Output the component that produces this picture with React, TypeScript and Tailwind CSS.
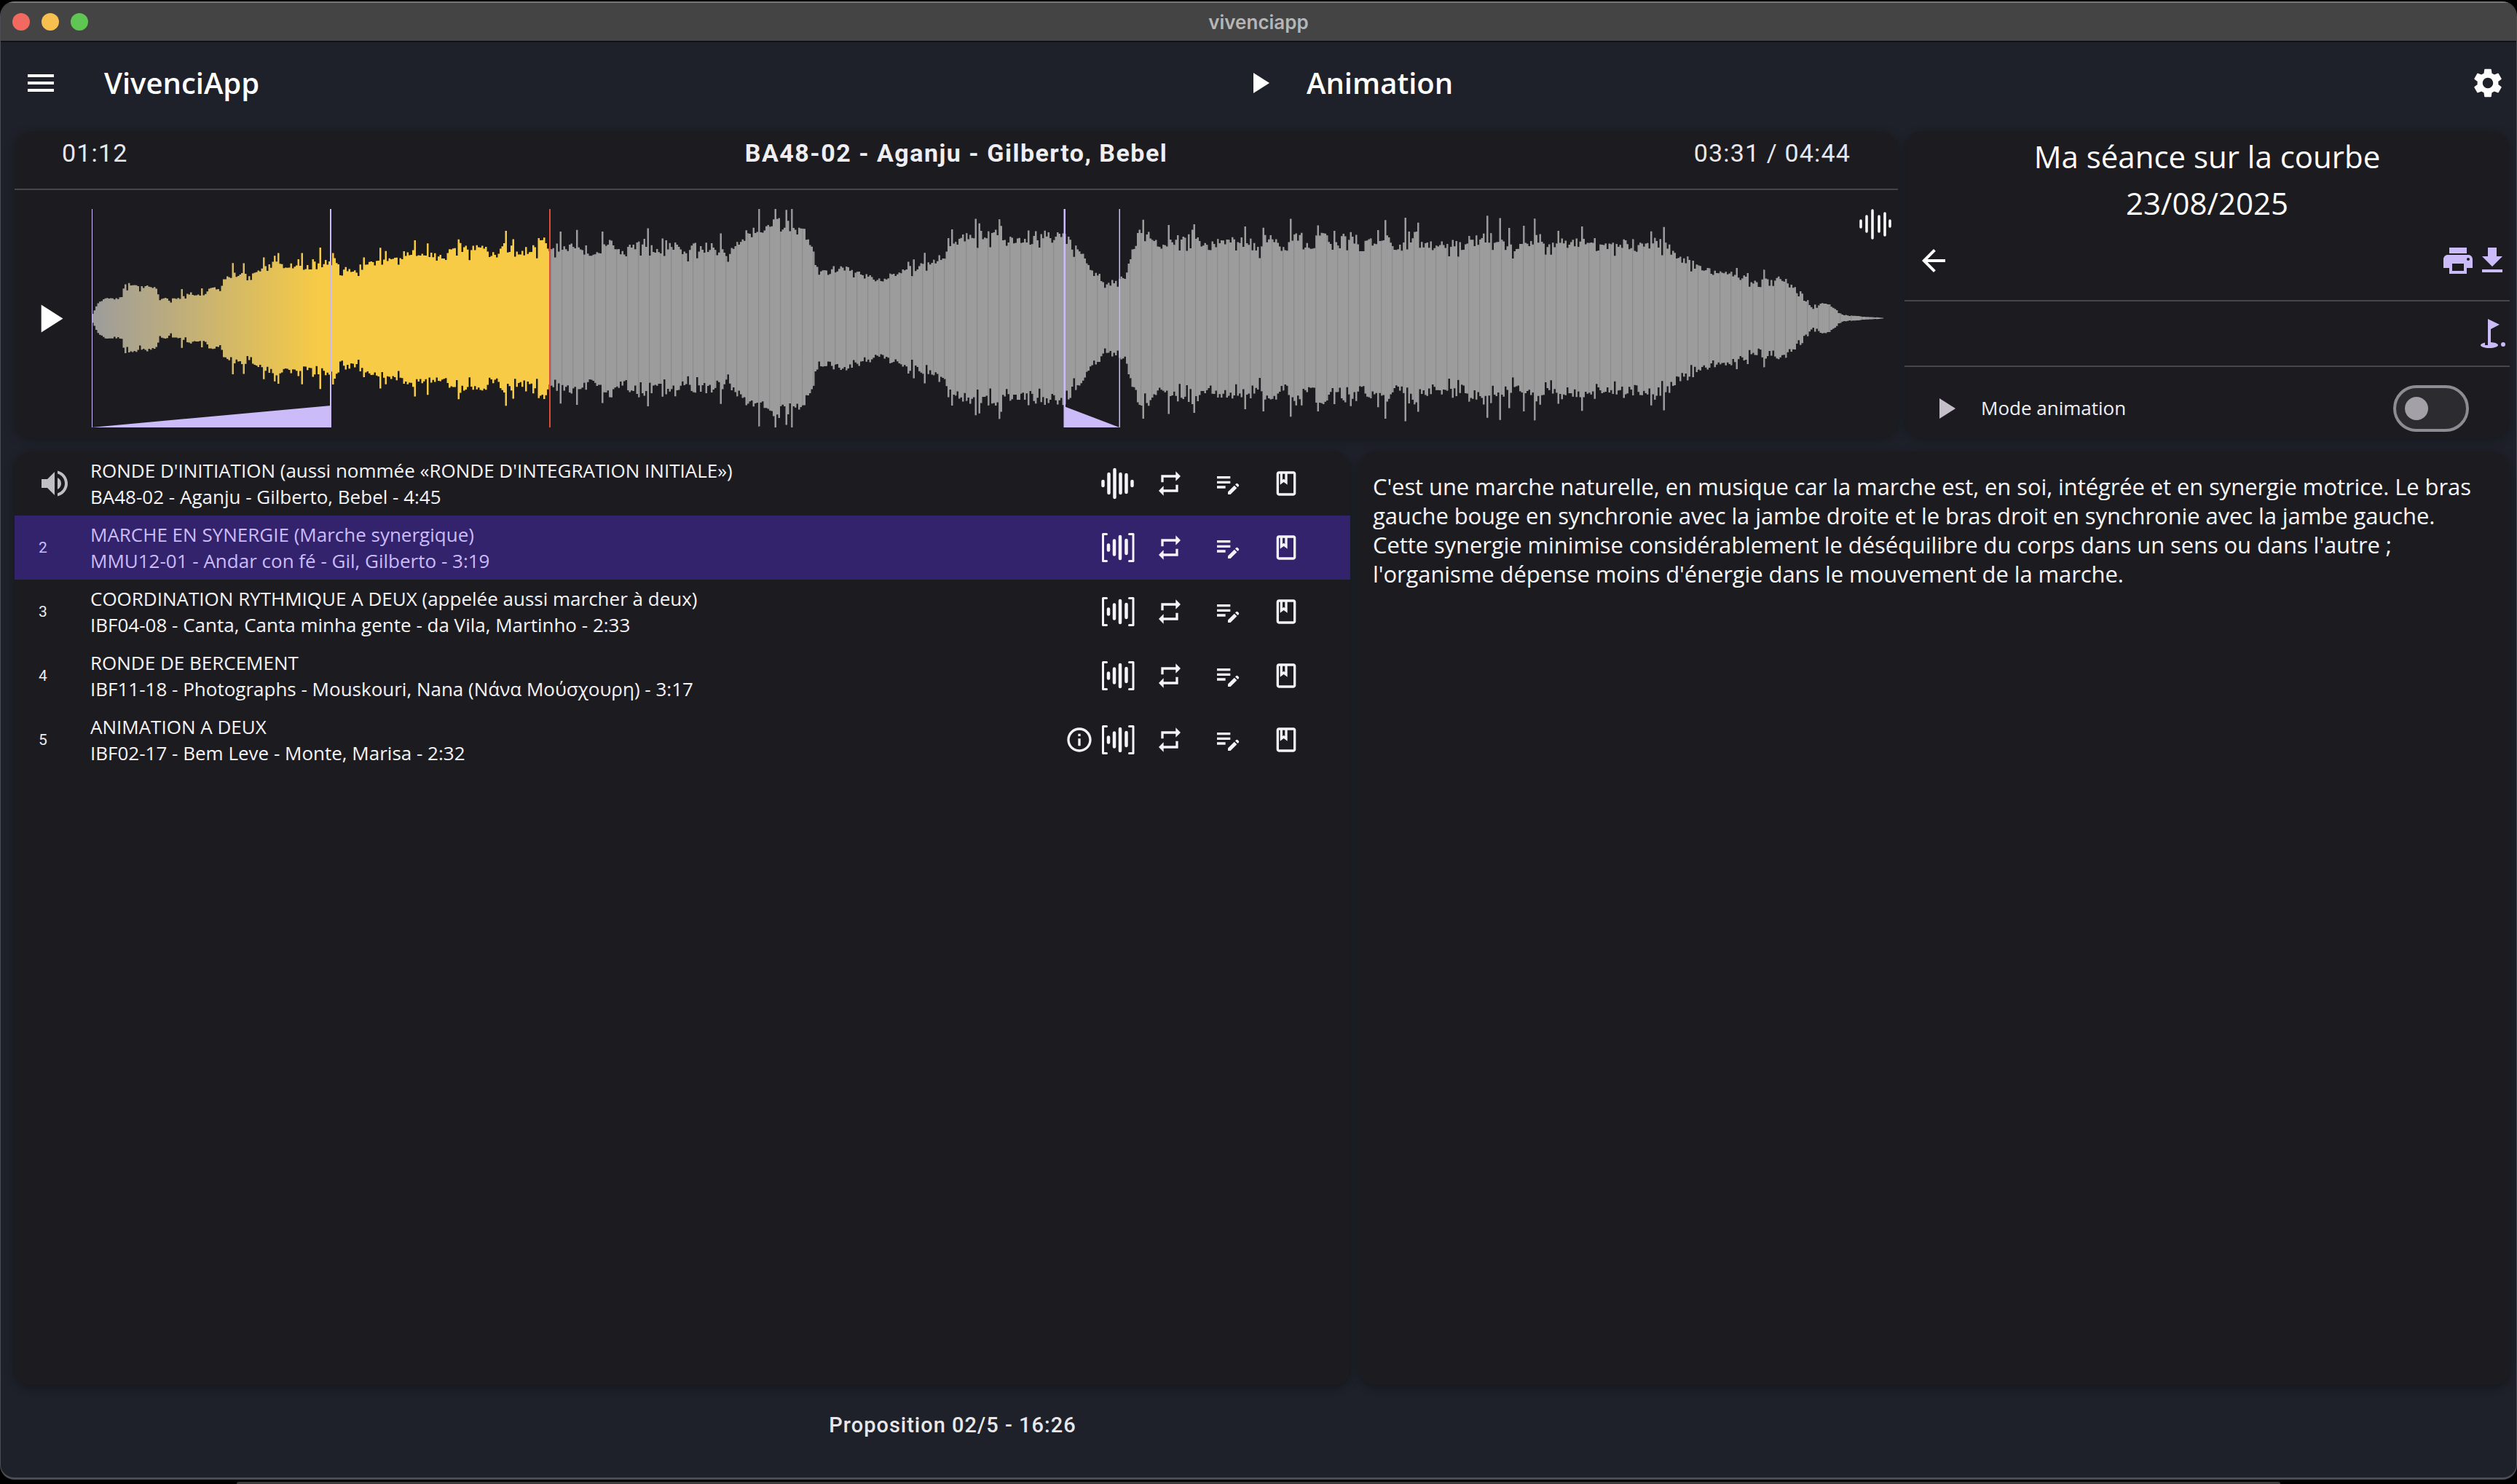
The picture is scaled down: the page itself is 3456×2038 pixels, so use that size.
import React from 'react';
import {
  MdArrowBack,
  MdDownload,
  MdEditNote,
  MdGolfCourse,
  MdInfoOutline,
  MdMenu,
  MdOutlineBook,
  MdPlayArrow,
  MdPrint,
  MdRepeat,
  MdSettings,
  MdVolumeUp,
} from 'react-icons/md';

// enveloppe de la forme d'onde : [x, demi-amplitude] en px écran
const ENVELOPE: [number, number][] = [
  [126, 6], [134, 22], [143, 30], [166, 28], [170, 46], [214, 42], [218, 25], [260, 32], [302, 42], [308, 62],
  [350, 68], [380, 74], [454, 78], [490, 66], [510, 78], [545, 90], [590, 88], [606, 82], [625, 100],
  [700, 94], [740, 106], [755, 96], [850, 98], [1000, 100], [1030, 122], [1104, 126], [1115, 98], [1122, 68],
  [1165, 71], [1210, 52], [1228, 68], [1296, 82], [1300, 102], [1325, 112], [1460, 112], [1485, 83], [1500, 62], [1530, 48],
  [1545, 60], [1560, 114], [1700, 108], [2000, 108], [2280, 106], [2296, 94], [2336, 66], [2400, 54],
  [2452, 52], [2470, 32], [2488, 15], [2506, 22], [2518, 14], [2528, 5], [2560, 2], [2586, 0.5],
];

const WAVE_LEFT = 126;
const WAVE_RIGHT = 2586;
const WAVE_MID = 150;
const PLAYED_X = 755;

function envelopeAt(x: number) {
  for (let i = 1; i < ENVELOPE.length; i++) {
    const [x0, a0] = ENVELOPE[i - 1];
    const [x1, a1] = ENVELOPE[i];
    if (x <= x1) return a0 + ((a1 - a0) * (x - x0)) / (x1 - x0);
  }
  return 0.5;
}

function buildWave() {
  let seed = 48213;
  const rand = () => {
    seed = (seed * 16807) % 2147483647;
    return seed / 2147483647;
  };
  const played: string[] = [];
  const rest: string[] = [];
  const stripes: string[] = [];
  let i = 0;
  let group = 1;
  for (let x = WAVE_LEFT; x < WAVE_RIGHT; x += 2.5) {
    if (i % 7 === 0) group = 0.93 + rand() * 0.14;
    const env = envelopeAt(x) * group;
    const r = rand();
    let amp = env * (0.9 + rand() * 0.14);
    if (r > 0.92) amp = env * (1.1 + rand() * 0.16);
    else if (r < 0.06) amp = env * 0.82;
    const low = amp * (0.97 + rand() * 0.06);
    const bar = `M${x} ${(WAVE_MID - amp).toFixed(1)}h2.5V${(WAVE_MID + low).toFixed(1)}h-2.5Z`;
    if (x < PLAYED_X) played.push(bar);
    else rest.push(bar);
    if (x >= PLAYED_X && i % 6 === 0) stripes.push(`M${x} ${(WAVE_MID - amp).toFixed(1)}h1.2V${(WAVE_MID + low).toFixed(1)}h-1.2Z`);
    i++;
  }
  return { played: played.join(''), rest: rest.join(''), stripes: stripes.join('') };
}

const wave = buildWave();

const Waveform: React.FC = () => (
  <svg width={2460} height={300} viewBox="126 0 2460 300" className="block shrink-0">
    <defs>
      <linearGradient id="playedFill" gradientUnits="userSpaceOnUse" x1="126" y1="0" x2="440" y2="0">
        <stop offset="0" stopColor="#9c9c9c" />
        <stop offset="1" stopColor="#f7cb45" />
      </linearGradient>
    </defs>
    <path d={wave.played} fill="url(#playedFill)" />
    <path d={wave.rest} fill="#9c9c9c" />
    <path d={wave.stripes} fill="#8b8b8b" />
    <polygon points="126,300 454,270 454,300" fill="#cbbcf9" />
    <polygon points="1461,271 1537,300 1461,300" fill="#cbbcf9" />
    <rect x="126" y="0" width="1" height="300" fill="#cbbcf9" />
    <rect x="453" y="0" width="2" height="300" fill="#cbbcf9" />
    <rect x="754" y="0" width="2" height="300" fill="#dc4a3a" />
    <rect x="1460.5" y="0" width="2.5" height="300" fill="#cbbcf9" />
    <rect x="1536.5" y="0" width="1.5" height="300" fill="#cbbcf9" />
  </svg>
);

const PlainWaveIcon: React.FC = () => (
  <svg width={48} height={48} viewBox="0 0 48 48" fill="none" stroke="currentColor" strokeWidth={4.5} strokeLinecap="round">
    <path d="M3.5 21v6M11.5 11v26M19.5 5v38M27.5 11v26M35.5 12v24M43.5 21v6" />
  </svg>
);

const BracketWaveIcon: React.FC = () => (
  <svg width={48} height={48} viewBox="0 0 48 48" fill="none" stroke="currentColor" strokeLinecap="round">
    <path d="M8.5 5.5H3.5V42.5H8.5M39.5 5.5H45V42.5H39.5" strokeWidth={3} strokeLinejoin="round" />
    <path d="M11 20.5v7M19 14.5v19M27 9v30M35.5 14v18" strokeWidth={4.5} />
  </svg>
);

const SmallWaveIcon: React.FC = () => (
  <svg width={48} height={44} viewBox="0 0 48 44" fill="none" stroke="#ffffff" strokeWidth={3.5} strokeLinecap="round">
    <path d="M4 17v9M12 11v21M20 3v38M29 11v21M37 7v30M44 17v8" />
  </svg>
);

type Track = {
  num?: number;
  title: string;
  detail: string;
};

const TRACKS: Track[] = [
  { title: "RONDE D'INITIATION (aussi nommée «RONDE D'INTEGRATION INITIALE»)", detail: 'BA48-02 - Aganju - Gilberto, Bebel - 4:45' },
  { num: 2, title: 'MARCHE EN SYNERGIE (Marche synergique)', detail: 'MMU12-01 - Andar con fé - Gil, Gilberto - 3:19' },
  { num: 3, title: 'COORDINATION RYTHMIQUE A DEUX (appelée aussi marcher à deux)', detail: 'IBF04-08 - Canta, Canta minha gente - da Vila, Martinho - 2:33' },
  { num: 4, title: 'RONDE DE BERCEMENT', detail: 'IBF11-18 - Photographs - Mouskouri, Nana (Νάνα Μούσχουρη) - 3:17' },
  { num: 5, title: 'ANIMATION A DEUX', detail: 'IBF02-17 - Bem Leve - Monte, Marisa - 2:32' },
];

const TrackRow: React.FC<{ track: Track; active: boolean }> = ({ track, active }) => (
  <div className={`flex h-[88px] items-center ${active ? 'bg-[#33226c]' : ''}`}>
    <div className="flex w-[78px] shrink-0 justify-center">
      {track.num ? (
        <span className={`pt-[2px] font-['Roboto',sans-serif] text-[21px] ${active ? 'text-[#cbbcf9]' : 'text-[#ecebf0]'}`}>{track.num}</span>
      ) : (
        <MdVolumeUp size={48} className="ml-[32px] shrink-0 text-[#c0bfc4]" />
      )}
    </div>
    <div className={`ml-[26px] text-[26px] leading-[36px] ${active ? 'text-[#cbbcf9]' : 'text-[#f4f3f6]'}`}>
      <div>{track.title}</div>
      <div>{track.detail}</div>
    </div>
    <div className="ml-auto mr-[68px] flex items-center text-[#f4f3f6]">
      <div className="mr-[9px] w-[40px]">{track.num === 5 && <MdInfoOutline size={40} />}</div>
      <div className="mr-[27px]">{track.num ? <BracketWaveIcon /> : <PlainWaveIcon />}</div>
      <MdRepeat size={40} className="mr-[40px]" />
      <MdEditNote size={40} className="mr-[40px]" />
      <MdOutlineBook size={40} />
    </div>
  </div>
);

export default function App() {
  return (
    <div className="h-[2038px] w-[3456px] overflow-hidden bg-black font-['Open_Sans',sans-serif] text-white">
      {/* fenêtre */}
      <div className="mt-[2px] flex h-[2030px] flex-col overflow-hidden rounded-[20px] border-x border-b-[3px] border-[#4a4d54] bg-[#1e2129]">
        {/* barre de titre */}
        <div className="relative flex h-[56px] shrink-0 items-center justify-center border-t-2 border-b-2 border-t-[#77777a] border-b-[#101114] bg-[#444444]">
          <div className="absolute left-[16px] flex gap-[16px]">
            <span className="h-[24px] w-[24px] rounded-full bg-[#f26a5f]" />
            <span className="h-[24px] w-[24px] rounded-full bg-[#f6bf4f]" />
            <span className="h-[24px] w-[24px] rounded-full bg-[#5fc553]" />
          </div>
          <span className="font-['Inter',sans-serif] text-[26px] font-semibold text-[#b6b6b6]">vivenciapp</span>
        </div>

        {/* en-tête */}
        <div className="flex h-[122px] shrink-0 items-center pb-[10px]">
          <div className="flex w-[1704px] shrink-0 items-center pl-[31px]">
            <MdMenu size={48} />
            <span className="ml-[63px] text-[40px] font-semibold">VivenciApp</span>
          </div>
          <MdPlayArrow size={48} />
          <span className="ml-[41px] text-[40px] font-semibold">Animation</span>
          <MdSettings size={48} className="ml-auto mr-[15px]" />
        </div>

        {/* lecteur + séance */}
        <div className="flex shrink-0 gap-[9px] pl-[19px]">
          <div className="relative h-[421px] w-[2586px] rounded-[24px] bg-[#1c1c20] shadow-[0_4px_14px_rgba(0,0,0,0.25)]">
            <div className="grid h-[81px] grid-cols-[1fr_auto_1fr] items-center border-b-2 border-[#45454b] px-[65px] pb-[18px] font-['Roboto',sans-serif] text-[34px] tracking-[1.15px] text-[#e8e7ec]">
              <span>01:12</span>
              <span className="font-bold tracking-[1.5px] text-[#efeef2]">BA48-02 - Aganju - Gilberto, Bebel</span>
              <span className="text-right">03:31 / 04:44</span>
            </div>
            <div className="flex pt-[26px]">
              <div className="flex h-[300px] w-[106px] shrink-0 items-center pl-[15px]">
                <MdPlayArrow size={65} className="shrink-0" />
              </div>
              <Waveform />
            </div>
            <div className="absolute left-[2531px] top-[106px]">
              <SmallWaveIcon />
            </div>
          </div>

          <div className="h-[421px] w-[831px] rounded-[24px] bg-[#1c1c20] shadow-[0_4px_14px_rgba(0,0,0,0.25)]">
            <div className="h-[131px] pt-[3px] text-center text-[42px] leading-[64px]">
              <div>Ma séance sur la courbe</div>
              <div>23/08/2025</div>
            </div>
            <div className="flex h-[103px] items-start justify-between border-b-2 border-[#45454b] pt-[23px] text-[#cbbcf9]">
              <MdArrowBack size={48} className="ml-[16px] text-white" />
              <div className="flex">
                <MdPrint size={48} />
                <MdDownload size={48} className="-ml-px" />
              </div>
            </div>
            <div className="flex h-[90px] items-center justify-end border-b-2 border-[#45454b] text-[#cbbcf9]">
              <MdGolfCourse size={48} />
            </div>
            <div className="flex h-[97px] items-center pl-[32px] pr-[56px] pt-[16px]">
              <MdPlayArrow size={48} className="text-[#c4bfc9]" />
              <span className="ml-[25px] text-[26px] text-[#f0eff3]">Mode animation</span>
              <div className="ml-auto flex h-[64px] w-[104px] items-center rounded-full border-4 border-[#8f8b94] bg-[#2c2b30] pl-[12px]">
                <span className="h-[32px] w-[32px] rounded-full bg-[#a3a0a8]" />
              </div>
            </div>
          </div>
        </div>

        {/* liste + description */}
        <div className="mt-[19px] flex h-[1283px] shrink-0 gap-[12px] pl-[19px]">
          <div className="w-[1834px] overflow-hidden rounded-[24px] bg-[#1c1c20] shadow-[0_4px_14px_rgba(0,0,0,0.3)]">
            {TRACKS.map((track, i) => (
              <TrackRow key={track.title} track={track} active={i === 1} />
            ))}
          </div>
          <div className="w-[1580px] rounded-[24px] bg-[#1c1c20] pl-[19px] pr-[30px] pt-[28px] text-[31px] leading-[40px] tracking-[-0.1px] text-[#f6f5f8] shadow-[0_4px_14px_rgba(0,0,0,0.3)]">
            C'est une marche naturelle, en musique car la marche est, en soi, intégrée et en synergie motrice. Le bras gauche bouge en synchronie avec la jambe droite et le bras droit en synchronie avec la jambe gauche. Cette synergie minimise considérablement le déséquilibre du corps dans un sens ou dans l'autre ; l'organisme dépense moins d'énergie dans le mouvement de la marche.
          </div>
        </div>

        {/* pied */}
        <div className="w-[2614px] pt-[36px] text-center font-['Roboto',sans-serif] text-[29px] font-medium leading-[36px] tracking-[1px] text-[#e8e7ec]">
          Proposition 02/5 - 16:26
        </div>
      </div>
      <div className="mx-[325px] mt-[3px] h-[3px] rounded-t-[8px] bg-[#3d3d3d]" />
    </div>
  );
}
